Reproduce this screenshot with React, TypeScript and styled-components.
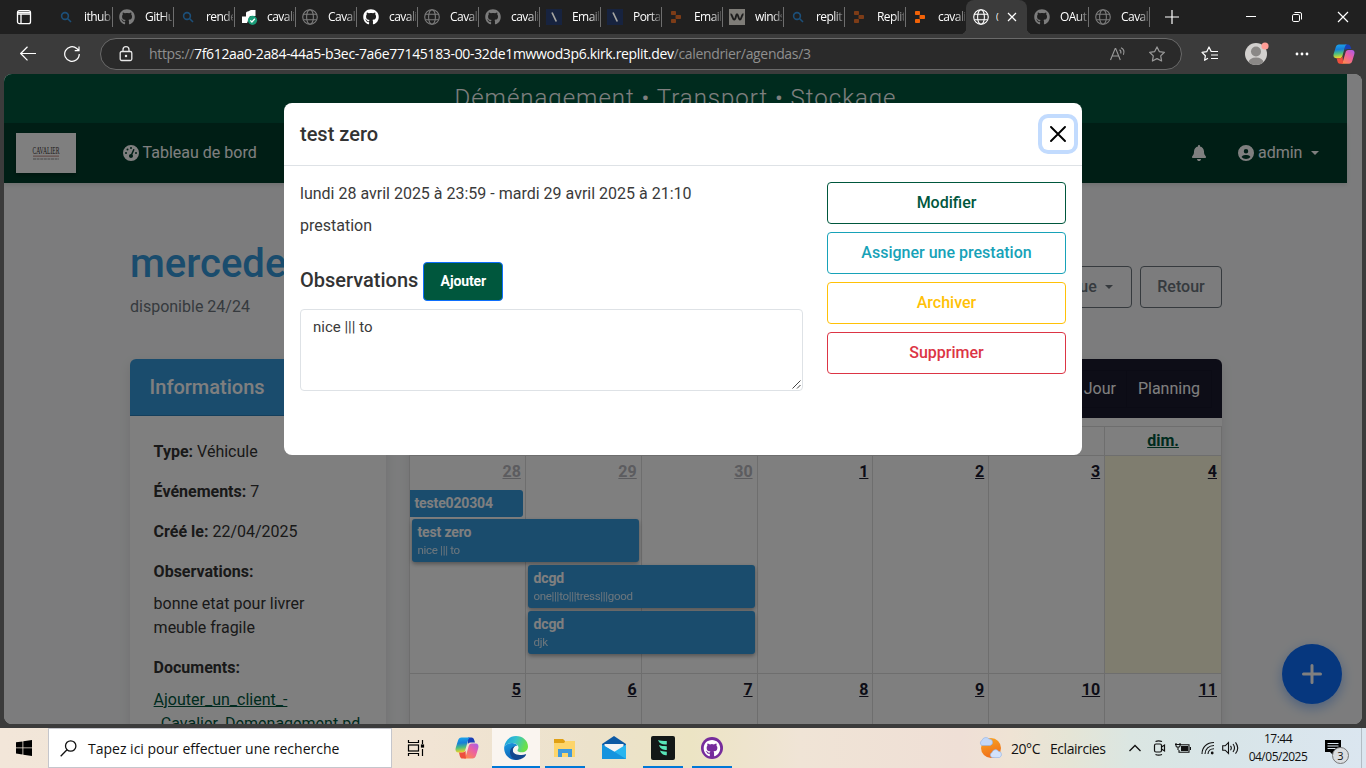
import React from "react";
import styled, { createGlobalStyle, css } from "styled-components";
import { FaGithub } from "react-icons/fa";
import { FaGaugeHigh, FaBell, FaCircleUser } from "react-icons/fa6";

const ui = `"Open Sans", "Noto Sans", sans-serif`;

const Global = createGlobalStyle`
  *, *::before, *::after { box-sizing: border-box; }
  body { margin: 0; overflow: hidden; background: #3b3b3b; font-family: Roboto, sans-serif; }
  svg { display: block; flex: none; }
`;

const Desktop = styled.div`
  width: 1366px;
  height: 768px;
  display: flex;
  flex-direction: column;
  overflow: hidden;
  background: #3b3b3b;
`;

/* ---------- browser chrome ---------- */

const TabStrip = styled.div`
  height: 34px;
  flex: none;
  display: flex;
  background: #202020;
  font-family: ${ui};
  font-size: 12px;
  color: #fff;
`;
const TabMenu = styled.div`
  width: 51px;
  display: flex;
  align-items: center;
  padding-left: 16px;
`;
const Tab = styled.div<{ $active?: boolean; $edge?: boolean }>`
  width: 61px;
  height: 34px;
  display: flex;
  align-items: center;
  padding-left: 7px;
  position: relative;
  ${(p) =>
    p.$active
      ? css`
          background: #3b3b3b;
          border-radius: 8px 8px 0 0;
          z-index: 1;
          &::before, &::after {
            content: "";
            position: absolute;
            bottom: 0;
            width: 6px;
            height: 6px;
          }
          &::before { left: -6px; background: radial-gradient(circle at 0 0, #202020 6px, #3b3b3b 6.5px); }
          &::after { right: -6px; background: radial-gradient(circle at 100% 0, #202020 6px, #3b3b3b 6.5px); }
        `
      : css`
          &::after {
            content: "";
            position: absolute;
            right: -1px;
            top: 7px;
            width: 1px;
            height: 20px;
            background: ${p.$edge ? "transparent" : "#6e6e6e"};
          }
        `}
`;
const TabIcon = styled.div`
  width: 16px;
  height: 16px;
  display: flex;
  align-items: center;
  justify-content: center;
`;
const TabLabel = styled.div`
  width: 27px;
  margin-left: 10px;
  overflow: hidden;
  white-space: nowrap;
  letter-spacing: -0.55px;
  line-height: 18px;
  -webkit-mask-image: linear-gradient(90deg, #000 17px, rgba(0, 0, 0, 0.25) 27px);
  mask-image: linear-gradient(90deg, #000 17px, rgba(0, 0, 0, 0.25) 27px);
`;
const ActiveLabel = styled(TabLabel)`
  width: 5px;
  margin-left: 7px;
  -webkit-mask-image: none;
  mask-image: none;
  font-size: 9px;
`;
const CloseTab = styled.div`
  margin-left: 4px;
`;
const NewTab = styled.div`
  width: 45px;
  display: flex;
  align-items: center;
  justify-content: center;
`;
const WindowControls = styled.div`
  margin-left: auto;
  display: flex;
`;
const WinButton = styled.div`
  width: 46px;
  height: 34px;
  padding: 9px 0 0 15px;
`;

const Toolbar = styled.div`
  height: 40px;
  flex: none;
  display: flex;
  align-items: center;
  padding-left: 20px;
  color: #fff;
`;
const NavButton = styled.div<{ $w: number }>`
  width: ${(p) => p.$w}px;
`;
const AddressBar = styled.div`
  width: 1082px;
  height: 32px;
  border: 1px solid #6a6a6a;
  border-radius: 16px;
  background: #2a2a2a;
  display: flex;
  align-items: center;
  padding: 0 15px 0 18px;
  font-family: ${ui};
  font-size: 14px;
  color: #8f8f8f;
`;
const Url = styled.div`
  margin-left: 16px;
  flex: 1;
  white-space: nowrap;
  letter-spacing: -0.34px;
  line-height: 20px;
  span { color: #fff; }
`;
const AddressIcons = styled.div`
  display: flex;
  gap: 21px;
`;
const ToolIcons = styled.div`
  display: flex;
  align-items: center;
  margin-left: 19px;
`;
const Slot = styled.div<{ $ml: number }>`
  margin-left: ${(p) => p.$ml}px;
`;

/* ---------- page ---------- */

const Viewport = styled.div`
  position: relative;
  height: 650px;
  flex: none;
  margin: 0 4px;
  border-radius: 8px;
  overflow: hidden;
  background: #f8f9fa;
  color: #333;
  font-size: 16px;
  line-height: 24px;
`;
const Page = styled.div`
  width: 1343px;
`;
const Banner = styled.div`
  height: 49px;
  display: flex;
  justify-content: center;
  align-items: center;
  padding-bottom: 2px;
  background: #00573d;
  color: #fff;
  font-size: 24px;
  font-weight: 300;
  letter-spacing: 1px;
`;
const Navbar = styled.div`
  height: 60px;
  display: flex;
  align-items: center;
  padding: 0 28px 0 12px;
  background: #003d2b;
  color: #fff;
  box-shadow: 0 2px 4px rgba(0, 0, 0, 0.1);
`;
const Logo = styled.div`
  width: 60px;
  height: 40px;
  background: #fff;
  display: flex;
  flex-direction: column;
  align-items: center;
  justify-content: center;
  box-shadow: 0 2px 4px rgba(0, 0, 0, 0.3);
`;
const NavLink = styled.div<{ $ml?: string }>`
  display: flex;
  align-items: center;
  gap: 4px;
  margin-left: ${(p) => p.$ml || "0"};
`;
const Caret = styled.span<{ $ml: number }>`
  margin-left: ${(p) => p.$ml}px;
  border: 4.5px solid transparent;
  border-top-color: currentColor;
  border-bottom: 0;
`;
const Main = styled.div`
  padding: 60px 125px 0 126px;
`;
const TitleRow = styled.div`
  display: flex;
  justify-content: space-between;
  height: 116px;
`;
const Heading = styled.h1`
  margin: -3px 0 7px;
  font-size: 40px;
  line-height: 48px;
  font-weight: 500;
  color: #3498db;
`;
const Muted = styled.div`
  color: #6c757d;
  margin-top: 7px;
`;
const Actions = styled.div`
  display: flex;
  gap: 8px;
  padding-top: 23px;
`;
const OutlineButton = styled.div`
  height: 42px;
  min-width: 82px;
  display: flex;
  align-items: center;
  justify-content: center;
  padding: 0 16px;
  border: 1px solid #6c757d;
  border-radius: 4px;
  color: #6c757d;
  font-weight: 500;
`;
const Columns = styled.div`
  display: flex;
  gap: 24px;
`;
const InfoCard = styled.div`
  width: 256px;
  height: 420px;
  background: #fff;
  border-radius: 6px 6px 0 0;
  box-shadow: 0 4px 12px rgba(0, 0, 0, 0.1);
`;
const InfoHeader = styled.div`
  height: 57px;
  padding: 16px 19.6px;
  border-radius: 6px 6px 0 0;
  background: #3498db;
  border-bottom: 1px solid #2a7fb9;
  color: #fff;
  font-size: 20px;
  font-weight: 500;
`;
const InfoBody = styled.div`
  padding: 24px 24px 24px 23.6px;
  p { margin: 0 0 16px; }
  b { font-weight: 700; }
  p.tight { margin-bottom: 8px; }
`;
const DocLink = styled.span`
  color: #00573d;
  text-decoration: underline;
  white-space: nowrap;
`;
const CalendarCard = styled.div`
  width: 812px;
  height: 420px;
  background: #fff;
  border-radius: 6px 6px 0 0;
  box-shadow: 0 4px 12px rgba(0, 0, 0, 0.1);
`;
const CalendarHeader = styled.div`
  height: 59px;
  margin-bottom: 8px;
  display: flex;
  justify-content: flex-end;
  align-items: center;
  padding-right: 10px;
  border-radius: 6px 6px 0 0;
  background: #1a1a2e;
  color: #fff;
`;
const ViewButton = styled.div<{ $last?: boolean }>`
  height: 38px;
  padding: 6px ${(p) => (p.$last ? 11 : 10)}px;
  border: 1px solid #17172a;
  margin-left: -1px;
`;
const Month = styled.div`
  position: relative;
  margin-left: -1px;
  width: 813px;
  border: 1px solid #ddd;
`;
const Week = styled.div<{ $h: number }>`
  display: grid;
  grid-template-columns: repeat(7, 1fr);
  height: ${(p) => p.$h}px;
  border-bottom: 1px solid #ddd;
`;
const Cell = styled.div<{ $today?: boolean; $faded?: boolean }>`
  padding: 4px 4px 0;
  text-align: right;
  font-weight: 700;
  text-decoration: underline;
  color: ${(p) => (p.$faded ? "#b8b8bf" : "#1a1a2e")};
  background: ${(p) => (p.$today ? "#fffadf" : "transparent")};
  &:not(:last-child) { border-right: 1px solid #ddd; }
`;
const WeekdayCell = styled(Cell)`
  padding-top: 2px;
  text-align: center;
  color: #00573d;
`;
const EventBox = styled.div<{ $x: number; $y: number; $w: number; $h: number; $cont?: boolean }>`
  position: absolute;
  left: ${(p) => p.$x}px;
  top: ${(p) => p.$y}px;
  width: ${(p) => p.$w}px;
  height: ${(p) => p.$h}px;
  padding: ${(p) => (p.$cont ? "3px 4.5px" : "3px 5.5px")};
  border-radius: ${(p) => (p.$cont ? "0 3px 3px 0" : "3px")};
  background: #3498db;
  box-shadow: ${(p) => (p.$cont ? "none" : "0 2px 4px rgba(0,0,0,0.35)")};
  color: #fff;
  font-size: 14px;
  font-weight: 700;
  line-height: 20px;
  letter-spacing: -0.15px;
  white-space: nowrap;
`;
const EventNote = styled.div`
  font-size: 11.5px;
  line-height: 16px;
  font-weight: 400;
  letter-spacing: -0.3px;
  opacity: 0.8;
`;
const Fab = styled.div`
  position: absolute;
  right: 20px;
  bottom: 20px;
  width: 60px;
  height: 60px;
  border-radius: 50%;
  background: #0d6efd;
  display: flex;
  align-items: center;
  justify-content: center;
  box-shadow: 0 4px 12px rgba(13, 110, 253, 0.4);
`;

/* ---------- modal ---------- */

const Backdrop = styled.div`
  position: absolute;
  inset: 0;
  display: flex;
  justify-content: center;
  align-items: flex-start;
  padding-top: 29px;
  background: rgba(0, 0, 0, 0.5);
`;
const Dialog = styled.div`
  width: 798px;
  height: 352px;
  border-radius: 8px;
  background: #fff;
`;
const DialogHeader = styled.div`
  height: 63px;
  display: flex;
  align-items: center;
  justify-content: space-between;
  padding: 0 8px 0 16px;
  border-bottom: 1px solid #dee2e6;
`;
const DialogTitle = styled.h5`
  margin: 0;
  font-size: 20px;
  font-weight: 500;
`;
const CloseButton = styled.div`
  width: 32px;
  height: 32px;
  display: flex;
  align-items: center;
  justify-content: center;
  border-radius: 6px;
  box-shadow: 0 0 0 4px #c2dbfe;
`;
const DialogBody = styled.div`
  display: flex;
  gap: 24px;
  padding: 16px;
`;
const Details = styled.div`
  width: 503px;
`;
const Line = styled.div`
  margin-bottom: 8px;
  color: #3a3a3a;
`;
const ObsRow = styled.div`
  display: flex;
  align-items: flex-start;
  gap: 5px;
  margin: 24px 0 8px;
  padding: 0;
  font-size: 20px;
  font-weight: 500;
  line-height: 36px;
`;
const AddButton = styled.div`
  width: 80px;
  height: 39px;
  display: flex;
  align-items: center;
  justify-content: center;
  padding-bottom: 1px;
  border: 1px solid #0d6efd;
  border-radius: 4px;
  background: #00573d;
  color: #fff;
  font-size: 14px;
  font-weight: 700;
  letter-spacing: -0.1px;
`;
const NoteArea = styled.div`
  position: relative;
  height: 82px;
  padding: 6px 12px;
  border: 1px solid #dee2e6;
  border-radius: 4px;
  font-size: 15px;
  line-height: 22px;
  color: #3a3a3a;
  svg { position: absolute; right: 1px; bottom: 1px; }
`;
const ButtonStack = styled.div`
  flex: 1;
  display: flex;
  flex-direction: column;
  gap: 8px;
`;
const ActionButton = styled.div<{ $color: string }>`
  height: 42px;
  display: flex;
  align-items: center;
  justify-content: center;
  border: 1px solid ${(p) => p.$color};
  border-radius: 4px;
  color: ${(p) => p.$color};
  font-weight: 500;
`;

/* ---------- taskbar ---------- */

const Taskbar = styled.div`
  height: 40px;
  margin-top: 4px;
  flex: none;
  display: flex;
  font-family: ${ui};
  color: #111;
  background: linear-gradient(90deg, #f2e6d9 0, #f1e4d4 430px, #ece2cb 590px, #ece4c4 690px, #f0e4d6 800px, #efdfd6 960px, #efe3d4 1010px, #e5e5d6 1070px, #dbe6e2 1130px, #d8e5e8 1220px, #dbe6f0 1366px);
`;
const StartButton = styled.div`
  width: 48px;
  display: flex;
  align-items: center;
  justify-content: center;
`;
const SearchBox = styled.div`
  width: 344px;
  border: 1px solid #c5c6cc;
  background: #fff;
  display: flex;
  align-items: center;
  padding-left: 11px;
  font-size: 14px;
  letter-spacing: 0;
  white-space: nowrap;
  svg { margin-right: 11px; }
`;
const TaskItem = styled.div<{ $w: number; $open?: boolean; $active?: boolean; $ml?: number }>`
  width: ${(p) => p.$w}px;
  margin-left: ${(p) => p.$ml || 0}px;
  padding-top: 2px;
  display: flex;
  align-items: center;
  justify-content: center;
  background: ${(p) => (p.$active ? "#faf5f0" : "transparent")};
  border-bottom: 2px solid ${(p) => (p.$open || p.$active ? "#0078d7" : "transparent")};
`;
const Tray = styled.div`
  margin-left: auto;
  display: flex;
  align-items: center;
  font-size: 14px;
`;
const Weather = styled.div`
  display: flex;
  align-items: center;
  width: 150px;
  white-space: nowrap;
  letter-spacing: -0.45px;
  span { margin-left: 8px; }
  span + span { margin-left: 10px; }
`;
const Clock = styled.div`
  width: 70px;
  margin-left: 4px;
  text-align: center;
  font-size: 12px;
  line-height: 18px;
  letter-spacing: -0.5px;
`;
const Notifications = styled.div`
  position: relative;
  width: 36px;
  height: 40px;
  margin-left: 12px;
  svg { margin: 12px 0 0 0; }
`;
const Count = styled.div`
  position: absolute;
  left: 7px;
  top: 19px;
  width: 17px;
  height: 17px;
  border: 1px solid #777;
  border-radius: 50%;
  background: #dadde0;
  font-size: 11px;
  line-height: 15px;
  text-align: center;
`;
const PeekLine = styled.div`
  width: 5px;
  height: 40px;
  border-left: 1px solid #b3bcc4;
`;

/* ---------- drawings ---------- */

const SearchGlyph = () => (
  <svg width="12" height="12" viewBox="0 0 12 12" fill="none" stroke="#1c4f79" strokeWidth="1.6">
    <circle cx="5" cy="5" r="3.4" />
    <path d="M7.5 7.5 11 11" />
  </svg>
);
const Globe = ({ c }: { c: string }) => (
  <svg width="16" height="16" viewBox="0 0 16 16" fill="none" stroke={c} strokeWidth="1.1">
    <circle cx="8" cy="8" r="7.3" />
    <ellipse cx="8" cy="8" rx="3.4" ry="7.3" />
    <path d="M1.4 5.3h13.2M1.4 10.7h13.2" />
  </svg>
);
const Replit = ({ c }: { c: string }) => (
  <svg width="12" height="14" viewBox="0 0 12 14" fill={c}>
    <rect x="1" y="1" width="5" height="4" rx="0.8" />
    <rect x="5.5" y="5" width="5.5" height="4" rx="0.8" />
    <rect x="1" y="9" width="5" height="4" rx="0.8" />
  </svg>
);
const Slash = () => (
  <svg width="16" height="16" viewBox="0 0 16 16">
    <rect width="16" height="16" fill="#17233f" />
    <path d="M6 3.5 10.3 12.5" stroke="#a7a7a2" strokeWidth="1.7" />
  </svg>
);
const Wave = () => (
  <svg width="16" height="16" viewBox="0 0 16 16">
    <rect width="16" height="16" fill="#7f7d78" />
    <path d="M1.5 5.2c2 0 1.8 5.3 3.7 5.3S6.700 5.200 8 5.200s1.300 5.300 3 5.300 1.500-5.300 3.500-5.300" fill="none" stroke="#1d1d1d" strokeWidth="1.9" />
  </svg>
);
const PuzzleCheck = () => (
  <svg width="17" height="16" viewBox="0 0 17 16">
    <path d="M1 7.500h4V4q0-1.500 1.500-1.500 1.200 0 2-.8.6-.7 1.700-.7h4.300v6H9l-3 7H1z" fill="#fff" />
    <circle cx="11.500" cy="11.300" r="4.600" fill="#1a9c78" />
    <path d="m9.300 11.400 1.600 1.600 2.900-3.200" fill="none" stroke="#fff" strokeWidth="1.300" />
  </svg>
);
const Copilot = ({ s, id }: { s: number; id: string }) => (
  <svg width={s} height={s} viewBox="0 0 24 24">
    <defs>
      <linearGradient id={id + "a"} x1="0" y1="0" x2="0.1" y2="1">
        <stop offset="0" stopColor="#1ba7ee" /><stop offset="0.400" stopColor="#167fd8" /><stop offset="0.700" stopColor="#4fbf7c" /><stop offset="1" stopColor="#e9d32a" />
      </linearGradient>
      <linearGradient id={id + "b"} x1="1" y1="0" x2="0.200" y2="1">
        <stop offset="0" stopColor="#a35cf0" /><stop offset="0.450" stopColor="#ea5fa5" /><stop offset="1" stopColor="#ff8a4a" />
      </linearGradient>
    </defs>
    <path d="M13 1.500h3.500c1.600 0 2.300 1.200 2.700 2.600l.8 2.400h-4.500c-1.500 0-2.300.8-2.700 2z" fill="#1a3fb5" />
    <path d="M6.500 1.500h9c-1.400.3-2 1.300-2.400 2.700l-2.700 9.300c-.5 1.800-1.400 3-3.200 3H3.500C1 16.500 0 14.500.7 12L3 4.500c.6-2 1.700-3 3.500-3z" fill={`url(#${id}a)`} />
    <path d="M17.500 22.500h-9c1.400-.3 2-1.300 2.400-2.700l2.700-9.300c.5-1.800 1.400-3 3.200-3h3.700c2.500 0 3.500 2 2.800 4.500L21 19.500c-.6 2-1.700 3-3.500 3z" fill={`url(#${id}b)`} />
    <path d="M11 22.500H7.500c-1.600 0-2.300-1.200-2.700-2.600L4 16.500h3.500c1.500 0 2.500-.8 3-2z" fill="#ee4f3d" />
  </svg>
);

const tabs: { icon: React.ReactNode; label: string }[] = [
  { icon: <SearchGlyph />, label: "ithub" },
  { icon: <FaGithub size={16} color="#7c7c7c" />, label: "GitHub" },
  { icon: <SearchGlyph />, label: "rende" },
  { icon: <PuzzleCheck />, label: "cavali" },
  { icon: <Globe c="#7c7c7c" />, label: "Caval" },
  { icon: <FaGithub size={16} color="#fff" />, label: "cavali" },
  { icon: <Globe c="#7c7c7c" />, label: "Caval" },
  { icon: <FaGithub size={16} color="#7c7c7c" />, label: "cavali" },
  { icon: <Slash />, label: "Email" },
  { icon: <Slash />, label: "Porta" },
  { icon: <Replit c="#7d3c17" />, label: "Email" },
  { icon: <Wave />, label: "winds" },
  { icon: <SearchGlyph />, label: "replit" },
  { icon: <Replit c="#7d3c17" />, label: "Replit" },
  { icon: <Replit c="#f26207" />, label: "cavali" },
];

const Chrome = () => (
  <>
    <TabStrip>
      <TabMenu>
        <svg width="16" height="16" viewBox="0 0 16 16" fill="none" stroke="#fff" strokeWidth="1.300">
          <rect x="1.500" y="1.700" width="13" height="13" rx="2" />
          <path d="M1.500 5h13M5 5v9.500M2 3.400h12" />
        </svg>
      </TabMenu>
      {tabs.map((t, i) => (
        <Tab key={i} $edge={i === 14}>
          <TabIcon>{t.icon}</TabIcon>
          <TabLabel>{t.label}</TabLabel>
        </Tab>
      ))}
      <Tab $active>
        <TabIcon><Globe c="#fff" /></TabIcon>
        <ActiveLabel>(</ActiveLabel>
        <CloseTab>
          <svg width="14" height="14" viewBox="0 0 14 14" stroke="#fff" strokeWidth="1.200"><path d="m3 3 8 8M11 3l-8 8" /></svg>
        </CloseTab>
      </Tab>
      <Tab>
        <TabIcon><FaGithub size={16} color="#7c7c7c" /></TabIcon>
        <TabLabel>OAut</TabLabel>
      </Tab>
      <Tab>
        <TabIcon><Globe c="#7c7c7c" /></TabIcon>
        <TabLabel>Caval</TabLabel>
      </Tab>
      <NewTab>
        <svg width="14" height="14" viewBox="0 0 14 14" stroke="#fff" strokeWidth="1.200"><path d="M7 0v14M0 7h14" /></svg>
      </NewTab>
      <WindowControls>
        <WinButton><svg width="16" height="16" viewBox="0 0 16 16" stroke="#fff"><path d="M3 7.500h10" /></svg></WinButton>
        <WinButton>
          <svg width="16" height="16" viewBox="0 0 16 16" stroke="#fff" fill="none">
            <rect x="3.500" y="5.500" width="7" height="7" rx="1.300" />
            <path d="M5.500 3.500h5.500a1.500 1.500 0 0 1 1.500 1.500v5.500" />
          </svg>
        </WinButton>
        <WinButton><svg width="16" height="16" viewBox="0 0 16 16" stroke="#fff" strokeWidth="1.200"><path d="m3 3 10 10M13 3 3 13" /></svg></WinButton>
      </WindowControls>
    </TabStrip>
    <Toolbar>
      <NavButton $w={44}>
        <svg width="16" height="16" viewBox="0 0 16 16" fill="none" stroke="#fff" strokeWidth="1.200"><path d="M16 7.500H.7M7.500.800.700 7.500l6.800 6.800" /></svg>
      </NavButton>
      <NavButton $w={36}>
        <svg width="16" height="16" viewBox="0 0 16 16" fill="none" stroke="#fff" strokeWidth="1.200"><path d="M15.300 8a7.300 7.300 0 1 1-2.500-5.500L15 4.700M15 .5v4.200h-4.300" /></svg>
      </NavButton>
      <AddressBar>
        <svg width="14" height="16" viewBox="0 0 14 16" fill="none" stroke="#e8e8e8" strokeWidth="1.300">
          <rect x="1.200" y="5.500" width="11.600" height="9" rx="1.500" />
          <path d="M4 5.500V3.700a3 3 0 0 1 6 0v1.800" />
          <circle cx="7" cy="10" r="0.600" fill="#e8e8e8" />
        </svg>
        <Url>https://<span>7f612aa0-2a84-44a5-b3ec-7a6e77145183-00-32de1mwwod3p6.kirk.replit.dev</span>/calendrier/agendas/3</Url>
        <AddressIcons>
          <svg width="18" height="16" viewBox="0 0 18 16" fill="none" stroke="#9a9a9a" strokeWidth="1.100">
            <path d="M1.500 14 6.200 2.500h.5L11.300 14M3.300 10h6.300M10.500 3.800c1.200.8 1.700 2.200 1.200 3.700M12 1.800c2.600 1.300 3.500 4.200 2.400 7" />
          </svg>
          <svg width="18" height="16" viewBox="0 0 18 16" fill="none" stroke="#9a9a9a" strokeWidth="1.200" strokeLinejoin="round">
            <path d="m9 .9 2.300 4.700 5.100.7-3.700 3.600.9 5.100L9 12.600 4.400 15l.9-5.100L1.600 6.300l5.100-.7z" />
          </svg>
        </AddressIcons>
      </AddressBar>
      <ToolIcons>
        <svg width="18" height="16" viewBox="0 0 18 16" fill="none" stroke="#fff" strokeWidth="1.200" strokeLinejoin="round">
          <path d="M7 12.300 3.600 14.300l.8-4.600L1 6.400l4.700-.7L8 1l2.200 4.500H17M10 9h7M10 12.500h7" />
        </svg>
        <Slot $ml={25}>
          <svg width="26" height="26" viewBox="0 0 26 26">
            <defs><clipPath id="av"><circle cx="12" cy="13" r="11" /></clipPath></defs>
            <circle cx="12" cy="13" r="11" fill="#d2d0ce" />
            <g clipPath="url(#av)" fill="#8a8886"><circle cx="12" cy="10.500" r="5" /><ellipse cx="12" cy="21.500" rx="7.500" ry="5" /></g>
            <circle cx="21" cy="5" r="3.600" fill="#ff9d96" />
          </svg>
        </Slot>
        <Slot $ml={25}>
          <svg width="14" height="4" viewBox="0 0 14 4" fill="#fff"><circle cx="2" cy="2" r="1.400" /><circle cx="7" cy="2" r="1.400" /><circle cx="12" cy="2" r="1.400" /></svg>
        </Slot>
        <Slot $ml={24}><Copilot s={22} id="c1" /></Slot>
      </ToolIcons>
    </Toolbar>
  </>
);

const weekdays = ["lun.", "mar.", "mer.", "jeu.", "ven.", "sam.", "dim."];

const Modal = () => (
  <Backdrop>
    <Dialog>
      <DialogHeader>
        <DialogTitle>test zero</DialogTitle>
        <CloseButton>
          <svg width="16" height="16" viewBox="0 0 16 16" stroke="#000" strokeWidth="1.900" strokeLinecap="round"><path d="m1 1 14 14M15 1 1 15" /></svg>
        </CloseButton>
      </DialogHeader>
      <DialogBody>
        <Details>
          <Line>lundi 28 avril 2025 à 23:59 - mardi 29 avril 2025 à 21:10</Line>
          <Line>prestation</Line>
          <ObsRow>Observations<AddButton>Ajouter</AddButton></ObsRow>
          <NoteArea>
            nice ||| to
            <svg width="9" height="9" viewBox="0 0 9 9" stroke="#444" strokeWidth="1"><path d="M.5 8.500l8-8M5 8.500l3.500-3.500" /></svg>
          </NoteArea>
        </Details>
        <ButtonStack>
          <ActionButton $color="#00573d">Modifier</ActionButton>
          <ActionButton $color="#17a2b8">Assigner une prestation</ActionButton>
          <ActionButton $color="#ffc107">Archiver</ActionButton>
          <ActionButton $color="#dc3545">Supprimer</ActionButton>
        </ButtonStack>
      </DialogBody>
    </Dialog>
  </Backdrop>
);

const LogoText = () => (
  <svg width="30" height="20" viewBox="0 0 30 20">
    <text x="15" y="11" textAnchor="middle" textLength="27" lengthAdjust="spacingAndGlyphs" fontFamily="Liberation Serif, serif" fontSize="10.500" fill="#3c3636">CAVALIER</text>
    <path d="M2 13.200h26" stroke="#c59d96" strokeWidth="1.300" />
    <path d="M2 16h26" stroke="#b5b5b5" strokeWidth="1.300" strokeDasharray="3 .6" />
  </svg>
);

const TaskIcons = () => (
  <>
    <TaskItem $w={48}>
      <svg width="18" height="18" viewBox="0 0 18 18" fill="none" stroke="#000" strokeWidth="1.200">
        <path d="M1.500 1v2.500h10V1M1.500 17v-2.500h10V17M15.500 1v4M15.500 10v7" /><rect x="1.500" y="6" width="10" height="6" /><rect x="14.500" y="6" width="2" height="2" fill="#000" />
      </svg>
    </TaskItem>
    <TaskItem $w={48} $ml={3}><Copilot s={24} id="c2" /></TaskItem>
    <TaskItem $w={48} $ml={1} $active>
      <svg width="24" height="24" viewBox="0 0 24 24">
        <defs>
          <linearGradient id="e1" x1="0" y1="0" x2="1" y2="0.300"><stop offset="0" stopColor="#1a9be0" /><stop offset="0.500" stopColor="#35c1ce" /><stop offset="1" stopColor="#6be04a" /></linearGradient>
          <linearGradient id="e2" x1="0" y1="0" x2="0.400" y2="1"><stop offset="0" stopColor="#1b9de2" /><stop offset="1" stopColor="#0c5fb4" /></linearGradient>
        </defs>
        <path d="M.3 10.500C1.200 4.500 6 0 12 0c7 0 12 5 12 10.500 0 3.800-2.800 5.800-6.200 5.800-2.600 0-4.300-.9-4.300-1.900 0-.7 1-1 1-2.800C14.500 9 11.500 7 8 7 4.500 7 1.500 8.500.3 10.500z" fill="url(#e1)" />
        <path d="M.3 10.500C1.500 8.500 4.500 7 8 7c2.500 0 4.500 1 5.500 2.400-3 .1-4.700 2.300-4.700 5 0 4.600 3.600 7.800 7.700 7.800-1.500 1.200-3.300 1.800-5 1.800C4.500 24-.8 17.500.3 10.500z" fill="url(#e2)" />
        <path d="M8.800 14.400c0-1.900.8-3.400 2.200-4.200-3 .5-5 3-5 6.300 0 4.200 3.700 7.500 8 7.300 3.300-.2 6.200-2 8-4.800.4-.7 0-1-.6-.7-1 .5-2.200.7-3.800.7-4.700 0-8.800-1.400-8.800-4.600z" fill="#14488f" />
      </svg>
    </TaskItem>
    <TaskItem $w={40} $ml={5} $open>
      <svg width="22" height="20" viewBox="0 0 22 20">
        <path d="M0 1h9l2 2v3H0z" fill="#e0a014" /><path d="M0 5h10l1.500-2H21v16H0z" fill="#fdd56a" />
        <path d="M4 11h14v8h-4v-4H8v4H4z" fill="#3f9add" />
      </svg>
    </TaskItem>
    <TaskItem $w={40} $ml={9}>
      <svg width="24" height="24" viewBox="0 0 24 24">
        <path d="M0 8 12 0l12 8v4H0z" fill="#0c59a4" /><path d="M2.500 8h19v8h-19z" fill="#f4f4f4" />
        <path d="M0 8.500 12 16l12-7.500V23H0z" fill="#28b5ef" /><path d="M0 8.500V23L24 23 12 15.500z" fill="#1594de" />
      </svg>
    </TaskItem>
    <TaskItem $w={40} $ml={9} $open>
      <svg width="24" height="24" viewBox="0 0 24 24">
        <rect width="24" height="24" rx="2" fill="#131817" />
        <path d="M7 4c2 1 5 .8 8.800 1v3.500C12 9 8.500 8 7 4zM8 9c2 1 4 1 7.800 1.300V14c-3.500 0-6.800-1-7.800-5zM9 14.500c1.800.8 3.500 1 6.800 1.200v3.500c-3 0-5.800-1-6.800-4.700z" fill="#58e6b8" />
      </svg>
    </TaskItem>
    <TaskItem $w={40} $ml={9} $open>
      <svg width="22" height="22" viewBox="0 0 22 22">
        <circle cx="11" cy="11" r="11" fill="#762c9c" />
        <g transform="translate(2.700 2.700) scale(.0335)"><path d="M248 8C106 8 0 114 0 252c0 111 70 205 166 239 13 2 17-6 17-12v-60c-70 14-84-30-84-30-11-29-28-37-28-37-23-16 1-15 1-15 25 2 39 26 39 26 22 38 58 27 73 21 2-16 9-27 16-34-56-6-112-14-112-110 0-28 8-41 24-59-3-7-11-33 2-68 21-6 69 27 69 27a236 236 0 0 1 126 0s48-34 69-27c14 35 5 61 3 68 16 18 26 31 26 59 0 96-59 104-115 110 9 8 17 23 17 47v82c0 7 5 15 17 12 97-32 166-126 166-237C492 114 386 8 248 8z" fill="#fff" /></g>
      </svg>
    </TaskItem>
  </>
);

export default function App() {
  return (
    <Desktop>
      <Global />
      <Chrome />
      <Viewport>
        <Page>
          <Banner>Déménagement • Transport • Stockage</Banner>
          <Navbar>
            <Logo><LogoText /></Logo>
            <NavLink $ml="46.6px"><FaGaugeHigh size={16} />Tableau de bord</NavLink>
            <NavLink $ml="auto"><FaBell size={16} /></NavLink>
            <NavLink $ml="31px"><FaCircleUser size={16} />admin<Caret $ml={4.600} /></NavLink>
          </Navbar>
          <Main>
            <TitleRow>
              <div>
                <Heading>mercedes</Heading>
                <Muted>disponible 24/24</Muted>
              </div>
              <Actions>
                <OutlineButton>Vue<Caret $ml={8} /></OutlineButton>
                <OutlineButton>Retour</OutlineButton>
              </Actions>
            </TitleRow>
            <Columns>
              <InfoCard>
                <InfoHeader>Informations</InfoHeader>
                <InfoBody>
                  <p><b>Type:</b> Véhicule</p>
                  <p><b>Événements:</b> 7</p>
                  <p><b>Créé le:</b> 22/04/2025</p>
                  <p className="tight"><b>Observations:</b></p>
                  <p>bonne etat pour livrer<br />meuble fragile</p>
                  <p className="tight"><b>Documents:</b></p>
                  <DocLink>Ajouter_un_client_-<br />_Cavalier_Demenagement.pd</DocLink>
                </InfoBody>
              </InfoCard>
              <CalendarCard>
                <CalendarHeader>
                  <ViewButton>Jour</ViewButton>
                  <ViewButton $last>Planning</ViewButton>
                </CalendarHeader>
                <Month>
                  <Week $h={29}>{weekdays.map((d) => <WeekdayCell key={d}>{d}</WeekdayCell>)}</Week>
                  <Week $h={218}>
                    {[28, 29, 30, 1, 2, 3, 4].map((d) => <Cell key={d} $faded={d > 20} $today={d === 4}>{d}</Cell>)}
                  </Week>
                  <Week $h={218}>{[5, 6, 7, 8, 9, 10, 11].map((d) => <Cell key={d}>{d}</Cell>)}</Week>
                  <EventBox $x={0} $y={63} $w={113} $h={27} $cont>teste020304</EventBox>
                  <EventBox $x={2} $y={92} $w={227} $h={43}>test zero<EventNote>nice ||| to</EventNote></EventBox>
                  <EventBox $x={118} $y={138} $w={227} $h={43}>dcgd<EventNote>one|||to|||tress|||good</EventNote></EventBox>
                  <EventBox $x={118} $y={184} $w={227} $h={43}>dcgd<EventNote>djk</EventNote></EventBox>
                </Month>
              </CalendarCard>
            </Columns>
          </Main>
        </Page>
        <Fab>
          <svg width="20" height="20" viewBox="0 0 20 20" stroke="#fff" strokeWidth="3" strokeLinecap="round"><path d="M10 1.500v17M1.500 10h17" /></svg>
        </Fab>
        <Modal />
      </Viewport>
      <Taskbar>
        <StartButton>
          <svg width="16" height="16" viewBox="0 0 16 16"><path d="M0 2.300 6.500 1.400v6.100H0zM7.300 1.300 16 0v7.500H7.300zM0 8.300h6.500v6.200L0 13.600zM7.300 8.300H16V16l-8.700-1.300z" /></svg>
        </StartButton>
        <SearchBox>
          <svg width="17" height="17" viewBox="0 0 17 17" fill="none" stroke="#111" strokeWidth="1.300"><circle cx="10.700" cy="6" r="5.200" /><path d="M7 9.800.7 16.300" /></svg>
          Tapez ici pour effectuer une recherche
        </SearchBox>
        <TaskIcons />
        <Tray>
          <Weather>
            <svg width="24" height="24" viewBox="0 0 24 24">
              <defs><linearGradient id="sun" x1="0" y1="0" x2="0.300" y2="1"><stop offset="0" stopColor="#f9a825" /><stop offset="1" stopColor="#f0701a" /></linearGradient></defs>
              <circle cx="12" cy="12" r="10" fill="url(#sun)" />
              <path d="M3 9.500a2.700 2.700 0 0 1 0-5 4 4 0 0 1 7-1.500 3.300 3.300 0 0 1 1 6.500z" fill="#c3d8f8" stroke="#8fb2ea" strokeWidth=".6" />
              <path d="M13 21.500a2.700 2.700 0 0 1 0-5 3.600 3.600 0 0 1 6.500-1.300 3.300 3.300 0 0 1 1 6.300z" fill="#d3e2fa" stroke="#8fb2ea" strokeWidth=".6" />
            </svg>
            <span>20°C</span><span>Eclaircies</span>
          </Weather>
          <svg width="12" height="8" viewBox="0 0 12 8" fill="none" stroke="#111" strokeWidth="1.300"><path d="m.5 7 5.500-5.500L11.500 7" /></svg>
          <Slot $ml={12}>
            <svg width="14" height="16" viewBox="0 0 14 16" fill="none" stroke="#111" strokeWidth="1.200"><rect x="1.500" y="4" width="7" height="8" rx="1.500" /><path d="m8.500 7 3-2v6l-3-2M2.500 1.500c2-1 4-1 6.500 0M2.500 14.500c2 1 4 1 6.500 0" /></svg>
          </Slot>
          <Slot $ml={8}>
            <svg width="16" height="12" viewBox="0 0 16 12" fill="none" stroke="#111" strokeWidth="1.100"><path d="M5.500 2.800H14v7.500H4V8M15.500 5v3M1 1v3c0 1.500 4 1.500 4 0V1M0 2.500h6M3 5v3" /><rect x="6.500" y="4.500" width="6" height="4" fill="#111" /></svg>
          </Slot>
          <Slot $ml={10}>
            <svg width="14" height="14" viewBox="0 0 14 14" fill="none" stroke="#111" strokeWidth="1.100"><path d="M1 13C1 6 6 1.500 13 1.500M4 13c0-5 4-8.500 9-8.500M7 13c0-3 2.500-5.300 6-5.300" /><circle cx="11.200" cy="12" r="1.400" fill="#111" stroke="none" /></svg>
          </Slot>
          <Slot $ml={7}>
            <svg width="17" height="14" viewBox="0 0 17 14" fill="none" stroke="#111" strokeWidth="1.100"><path d="M.7 4.800h2.500L6.500 1.500v11L3.200 9.200H.7zM8.500 4.800c1 1.300 1 3 0 4.400M11 3c1.900 2.500 1.900 5.500 0 8M13.500 1.300c2.700 3.500 2.700 8 0 11.400" /></svg>
          </Slot>
          <Clock>17:44<br />04/05/2025</Clock>
          <Notifications>
            <svg width="16" height="16" viewBox="0 0 16 16"><path d="M0 0h16v12H9v4l-4-4H0z" fill="#000" /><path d="M2.500 3.500h11M2.500 6h11M2.500 8.500h8" stroke="#dbe6f0" strokeWidth="1" /></svg>
            <Count>3</Count>
          </Notifications>
          <PeekLine />
        </Tray>
      </Taskbar>
    </Desktop>
  );
}
